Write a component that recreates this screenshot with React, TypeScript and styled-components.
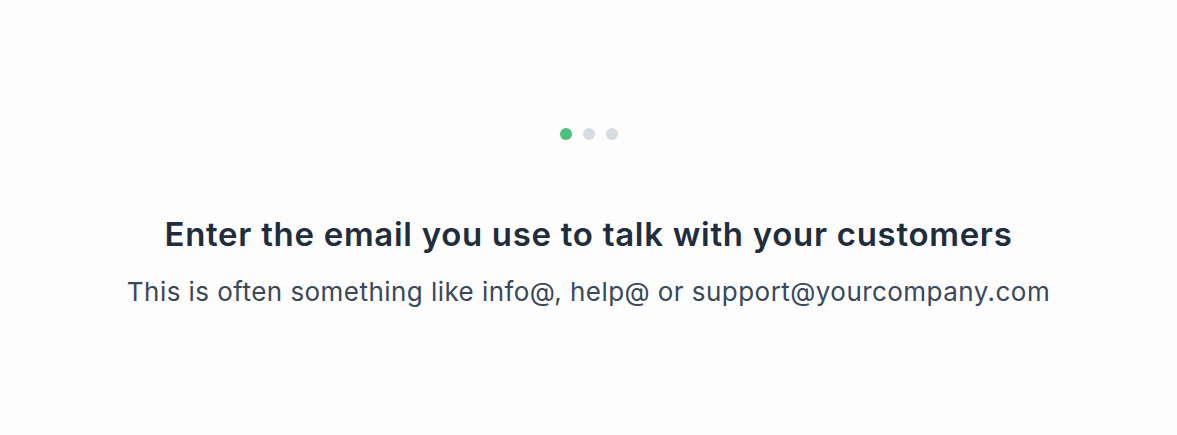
import React from 'react';
import styled, { createGlobalStyle } from 'styled-components';

const COLOR = {
  GREEN: '#4cc17f',
  DOT: '#d5dde3',
  HEADING: '#1f2d3d',
  TEXT: '#3a4859',
};

const GlobalStyle = createGlobalStyle`
  html, body {
    margin: 0;
    padding: 0;
    background: #fdfdfd;
    font-family: Inter, 'Noto Sans', sans-serif;
  }
`;

const steps = [true, false, false];

const App: React.FC = () => (
  <PageContainer>
    <GlobalStyle />
    <StepDots>
      {steps.map((active, i) => (
        <Dot key={i} $active={active} />
      ))}
    </StepDots>
    <Title>Enter the email you use to talk with your customers</Title>
    <Subtitle>This is often something like info@, help@ or support@yourcompany.com</Subtitle>
  </PageContainer>
);

export default App;

const PageContainer = styled.div`
  height: 435px;
  display: flex;
  flex-direction: column;
  align-items: center;
  padding-top: 128px;
  box-sizing: border-box;
`;

const StepDots = styled.div`
  display: flex;
  gap: 11px;
`;

const Dot = styled.span<{ $active: boolean }>`
  width: 12px;
  height: 12px;
  border-radius: 50%;
  background: ${(p) => (p.$active ? COLOR.GREEN : COLOR.DOT)};
`;

const Title = styled.h1`
  margin: 74px 0 0;
  font-size: 33px;
  line-height: 40px;
  font-weight: 600;
  color: ${COLOR.HEADING};
  letter-spacing: 0.7px;
`;

const Subtitle = styled.p`
  margin: 22px 0 0;
  font-size: 26px;
  line-height: 32px;
  font-weight: 400;
  color: ${COLOR.TEXT};
  letter-spacing: 0.45px;
`;
